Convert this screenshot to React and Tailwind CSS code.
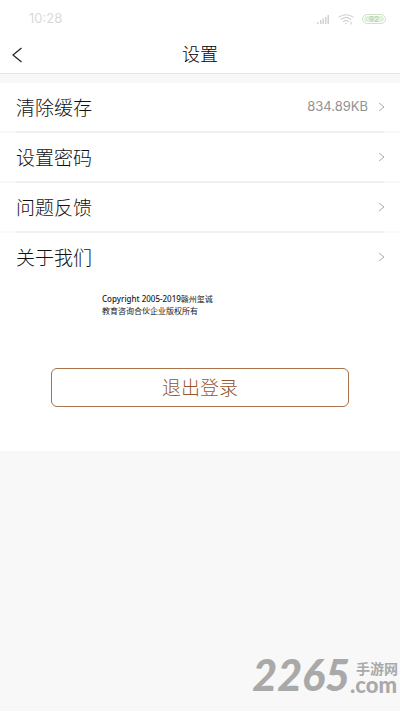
import React from 'react';

const menuItems = [
  { id: 'cache', label: '清除缓存', value: '834.89KB' },
  { id: 'password', label: '设置密码' },
  { id: 'feedback', label: '问题反馈' },
  { id: 'about', label: '关于我们' },
];

const StatusBar = () => {
  return (
    <div className="flex h-9 items-center justify-between pl-[29px] pr-3.5 pt-0.5">
      <span className="text-[13px] text-[#dadada]">10:28</span>
      <div className="flex items-center gap-2">
        <svg className="h-2.5 w-3.5" viewBox="0 0 14 10" fill="#d2d2d2" aria-hidden="true">
          <rect x="1" y="8" width="1.5" height="2" />
          <rect x="4" y="6" width="1.5" height="4" />
          <rect x="6.5" y="4.5" width="1.5" height="5.5" />
          <rect x="9" y="3" width="1.5" height="7" />
          <rect x="11.5" y="1" width="1.5" height="9" />
        </svg>
        <svg
          className="h-3 w-4"
          viewBox="0 0 16 12"
          fill="none"
          stroke="#cdcdcd"
          strokeWidth="1.1"
          strokeLinecap="round"
          aria-hidden="true"
        >
          <path d="M1 4.2C5 .9 11 .9 15 4.2" />
          <path d="M3.3 6.4c2.9-2.3 6.5-2.3 9.4 0" />
          <path d="M5.6 8.5c1.5-1.2 3.3-1.2 4.8 0" />
          <circle cx="8" cy="10.5" r=".8" fill="#cdcdcd" stroke="none" />
          <path d="M13 9v2" />
        </svg>
        <span className="flex h-2.5 w-6 items-center justify-center rounded-full border border-[#cfe3c8] p-px">
          <span className="flex h-full w-full items-center justify-center rounded-full bg-[#e0f3da] text-[8px] leading-none text-[#b4c9ae]">
            92
          </span>
        </span>
      </div>
    </div>
  );
};

const MenuRow = ({ item, isLast }) => {
  return (
    <li>
      <button type="button" className="flex h-12 w-full items-center justify-between pl-4 pr-[15px]">
        <span className="pt-1 text-[19px] font-light text-[#111111]">{item.label}</span>
        <span className="flex items-center gap-2.5">
          {item.value && <span className="text-[13px] text-[#929292]">{item.value}</span>}
          <svg className="h-2.5 w-[7px]" viewBox="0 0 7 10" fill="none" stroke="#aaaaaa" strokeWidth="1" aria-hidden="true">
            <path d="M1 1l5 4-5 4" />
          </svg>
        </span>
      </button>
      {!isLast && (
        <div className="bg-[#f9f9f9] px-4">
          <div className="h-0.5 bg-[#f0f0f0]" />
        </div>
      )}
    </li>
  );
};

const App = () => {
  return (
    <div className="flex min-h-screen flex-col bg-[#f8f8f8] font-[Inter,'Noto_Sans_CJK_SC',sans-serif]">
      <header className="border-b border-[#e4e4e4] bg-white">
        <StatusBar />
        <div className="grid h-[37px] grid-cols-3 items-center px-3">
          <button type="button" aria-label="返回" className="justify-self-start">
            <svg className="h-4 w-[11px]" viewBox="0 0 11 16" fill="none" stroke="#1f1f1f" strokeWidth="1.2" aria-hidden="true">
              <path d="M9.5 1L1 8l8.5 7" />
            </svg>
          </button>
          <h1 className="text-center text-lg font-light text-black">设置</h1>
        </div>
      </header>

      <main className="mt-[9px] bg-white pb-11">
        <ul>
          {menuItems.map((item, index) => (
            <MenuRow key={item.id} item={item} isLast={index === menuItems.length - 1} />
          ))}
        </ul>

        <p className="mt-3 pl-[102px] font-['Noto_Sans','Noto_Sans_CJK_SC',sans-serif] text-[8px] leading-3 text-[#1a1a1a]">
          <span className="font-medium">Copyright 2005-2019</span>赣州玺诚
          <br />
          教育咨询合伙企业版权所有
        </p>

        <div className="mt-[51px] px-[51px]">
          <button
            type="button"
            className="h-[39px] w-full rounded-md border border-[#a8714a] pt-1 text-[19px] font-light text-[#96562a]"
          >
            退出登录
          </button>
        </div>
      </main>

      <footer className="mt-auto flex items-end justify-end pb-[18px] text-[#a9a9a9]">
        <span className="font-[Lato,sans-serif] text-[43px] font-black italic leading-9">2265</span>
        <span className="flex flex-col pr-0.5">
          <span className="pl-1.5 text-[14px] font-bold leading-4">手游网</span>
          <span className="font-[Lato,sans-serif] text-[22px] font-black leading-4">.com</span>
        </span>
      </footer>
    </div>
  );
};

export default App;
